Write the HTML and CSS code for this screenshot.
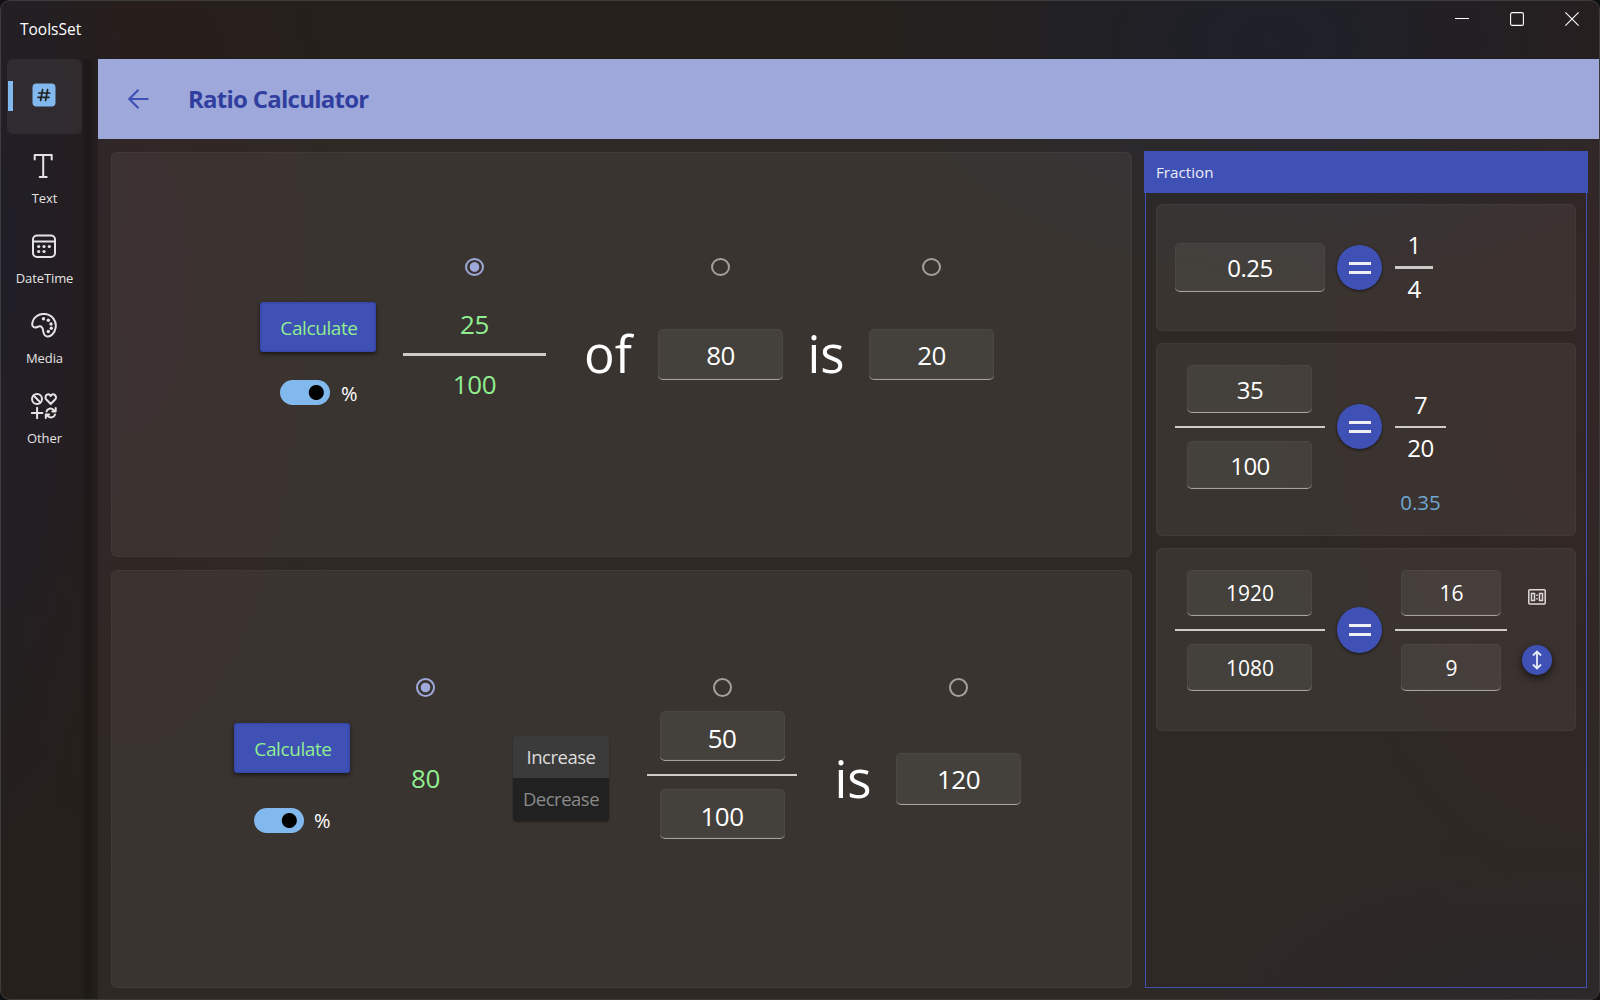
FILE: index.html
```html
<!DOCTYPE html>
<html lang="en">
<head>
<meta charset="utf-8">
<title>ToolsSet</title>
<link rel="stylesheet" href="styles.css">
</head>
<body>
<div class="window">
  <header class="titlebar">
    <span class="app-name">ToolsSet</span>
    <div class="caption">
      <svg width="14" height="14" viewBox="0 0 14 14"><path d="M0 6.5H14" /></svg>
      <svg width="14" height="14" viewBox="0 0 14 14"><rect x=".6" y=".6" width="12.8" height="12.8" rx="1.5" /></svg>
      <svg width="14" height="14" viewBox="0 0 14 14"><path d="M.4.4 13.6 13.6M13.6.4.4 13.6" /></svg>
    </div>
  </header>
  <div class="main">
    <nav class="sidebar">
      <a class="nav active">
        <svg width="24" height="24" viewBox="0 0 24 24"><rect x=".5" y=".5" width="23" height="23" rx="4" fill="#81b8ed"/><path d="M10.600 6.500 8.600 17.500M15.600 6.500 13.600 17.500M6.800 10H17.800M6 14.300H17" fill="none" stroke="#222" stroke-width="1.700" stroke-linecap="round"/></svg>
      </a>
      <a class="nav">
        <svg width="26" height="26" viewBox="0 0 26 26"><path d="M3.700 6.500V2H20.700V6.500M12.200 2V24M8.700 24H15.700"/></svg>
        <span>Text</span>
      </a>
      <a class="nav">
        <svg width="26" height="26" viewBox="0 0 26 26"><rect x="2" y="2.500" width="22" height="21.500" rx="4"/><path d="M2 8.500H24"/><g class="dots"><circle cx="7.700" cy="13.500" r="1.600"/><circle cx="13" cy="13.500" r="1.600"/><circle cx="18.300" cy="13.500" r="1.600"/><circle cx="7.700" cy="18.500" r="1.600"/><circle cx="13" cy="18.500" r="1.600"/></g></svg>
        <span>DateTime</span>
      </a>
      <a class="nav">
        <svg width="26" height="26" viewBox="0 0 26 26"><path d="M1.200 11.500C1.500 4.500 8 0 14.500 1.100C21.500 2.300 25.800 8.200 24.600 14.800C23.700 20.500 19.500 24.300 15.800 23.400C13.200 22.800 12.500 20.500 12.200 18C11.900 14.800 10.700 12.800 7.700 13.500C6 14 4.500 15.200 2.800 14.200C1.600 13.500 1.100 12.600 1.200 11.500Z"/><g class="dots"><circle cx="12.500" cy="5.700" r="1.700"/><circle cx="17.300" cy="7.300" r="1.700"/><circle cx="20" cy="11" r="1.700"/><circle cx="20.300" cy="15.200" r="1.700"/><circle cx="17.300" cy="18.500" r="1.700"/></g></svg>
        <span>Media</span>
      </a>
      <a class="nav">
        <svg width="26" height="26" viewBox="0 0 26 26"><circle cx="6" cy="6" r="5"/><path d="M2.600 2.500 9.400 9.500"/><path d="M19.700 11 15.300 6.500C13.900 5 14.400 2.700 16 1.700C17.500 .9 19 1.600 19.700 3C20.400 1.600 22 .9 23.500 1.700C25.100 2.700 25.500 5 24.100 6.500Z"/><path d="M.8 20H11.400M6.100 14.700V25.300"/><path d="M15.500 18.500C16.300 15.500 20 14.500 22.700 17M24.700 15V18.400H21.300M24 21.500C23.200 24.600 19.300 25.500 16.700 23M14.800 25V21.600H18.200"/></svg>
        <span>Other</span>
      </a>
    </nav>
    <section class="content">
      <div class="page-head">
        <svg width="21" height="20" viewBox="0 0 21 20"><path d="M20.500 10H1.500M10.500 .8 1.300 10 10.500 19.200"/></svg>
        <h1>Ratio Calculator</h1>
      </div>
      <div class="panels">
        <div class="left">
          <div class="card calc of">
            <div class="actions">
              <button class="btn">Calculate</button>
              <div class="switch"><i></i><span>%</span></div>
            </div>
            <div class="col ratio">
              <b class="radio on"></b>
              <span class="num result">25</span>
              <hr>
              <span class="num result">100</span>
            </div>
            <span class="word w-of">of</span>
            <div class="col"><b class="radio"></b><div class="field">80</div></div>
            <span class="word w-is">is</span>
            <div class="col"><b class="radio"></b><div class="field">20</div></div>
          </div>
          <div class="card calc change">
            <div class="actions">
              <button class="btn">Calculate</button>
              <div class="switch"><i></i><span>%</span></div>
            </div>
            <div class="col base"><b class="radio on"></b><span class="num result">80</span></div>
            <div class="modes"><span class="picked">Increase</span><span>Decrease</span></div>
            <div class="col ratio">
              <b class="radio"></b>
              <div class="field">50</div>
              <hr>
              <div class="field">100</div>
            </div>
            <span class="word w-is">is</span>
            <div class="col total"><b class="radio"></b><div class="field">120</div></div>
          </div>
        </div>
        <aside class="group">
          <h2>Fraction</h2>
          <div class="group-body">
            <div class="card frac one">
              <div class="field">0.25</div>
              <div class="eq"><i></i><i></i></div>
              <div class="stack"><span>1</span><hr><span>4</span></div>
            </div>
            <div class="card frac two">
              <div class="inputs"><div class="field">35</div><hr><div class="field">100</div></div>
              <div class="eq"><i></i><i></i></div>
              <div class="stack"><span>7</span><hr><span>20</span><em>0.35</em></div>
            </div>
            <div class="card frac three">
              <div class="inputs"><div class="field">1920</div><hr><div class="field">1080</div></div>
              <div class="eq"><i></i><i></i></div>
              <div class="inputs small"><div class="field">16</div><hr><div class="field">9</div></div>
              <div class="tools">
                <svg width="18" height="16" viewBox="0 0 18 16"><rect x=".8" y=".8" width="16.400" height="14.200" rx="1"/><rect x="3.500" y="4.500" width="3" height="7"/><rect x="11.500" y="4.500" width="3" height="7"/><path d="M9 5.500V7M9 9V10.500"/></svg>
                <div class="swap"><svg width="12" height="20" viewBox="0 0 12 20"><path d="M6 2V18M2 5.500 6 1.500 10 5.500M2 14.500 6 18.500 10 14.500"/></svg></div>
              </div>
            </div>
          </div>
        </aside>
      </div>
    </section>
  </div>
</div>
</body>
</html>
```
FILE: styles.css
```css
* { box-sizing: border-box; }
body { margin: 0; background: #111; font-family: "Open Sans", "Noto Sans", sans-serif; font-weight: 450; color: #fff; }
h1, h2 { margin: 0; }
svg { display: block; flex: none; fill: none; }

.window {
  width: 1600px; height: 1000px; overflow: hidden;
  display: flex; flex-direction: column;
  border: 1px solid #3c3c3c; border-radius: 10px;
  background:
    radial-gradient(ellipse 420px 260px at 1270px 40px, #1e202a 0, #1e202a00 100%),
    radial-gradient(ellipse 130px 640px at 0 260px, #201e28 0, #201e2800 100%),
    radial-gradient(ellipse 230px 620px at 130px 280px, #291d1d 0, #291d1d00 100%),
    radial-gradient(ellipse 330px 640px at 1590px 330px, #2a1d1d 0, #2a1d1d00 100%),
    radial-gradient(ellipse 400px 180px at 1540px 1000px, #231f21 0, #231f2100 100%),
    #25201b;
}
.titlebar { height: 58px; flex: none; display: flex; justify-content: space-between; padding: 0 20px 0 19px; }
.app-name { font-size: 15.500px; line-height: 22px; padding-top: 17px; letter-spacing: 0; }
.caption { display: flex; gap: 41px; padding-top: 11px; }
.caption svg { stroke: #fff; stroke-width: 1.1; }
.main { flex: 1; display: flex; min-height: 0; }

.sidebar { width: 97px; flex: none; padding-left: 6px; background: linear-gradient(90deg, transparent 77px, #0000 79px, #00000038 86px, #0000 96px); }
.nav { width: 75px; height: 75px; margin-bottom: 5px; padding-top: 14px; display: flex; flex-direction: column; align-items: center; color: #e4e3e3; font-size: 13px; letter-spacing: -.1px; }
.nav span { line-height: 18px; margin-top: 10px; }
.nav svg { margin-right: 2px; stroke: #e4e3e3; stroke-width: 2; stroke-linecap: round; stroke-linejoin: round; }
.nav .dots { fill: #e4e3e3; stroke: none; }
.nav.active { border-radius: 6px; background: linear-gradient(#81b8ed, #81b8ed) 1px 22px / 5px 30px no-repeat, #ffffff0f; padding-top: 24px; }
.nav.active svg { stroke: none; }

.content { flex: 1; display: flex; flex-direction: column; background: #ffffff0b; }
.page-head { height: 80px; flex: none; display: flex; align-items: center; padding-left: 30px; gap: 39px; background: #9fa8da; color: #303f9f; }
.page-head svg { stroke: #3f51b5; stroke-width: 2.2; }
.page-head h1 { font-size: 24px; font-weight: 700; line-height: 30px; letter-spacing: -.75px; }
.panels { flex: 1; display: flex; gap: 12px; padding: 12px 11px 11px 13px; }
.left { width: 1021px; padding-top: 1px; display: grid; grid-template-rows: 405px 418px; gap: 13px; }
.card { border-radius: 6px; background: #ffffff0e; box-shadow: inset 0 0 0 1px #ffffff09; display: flex; align-items: flex-start; }

.btn { width: 116px; height: 50px; border: 0; border-radius: 3px; padding: 2px 0 0 2px; background: #3f51b5; color: #90ee90; font: 450 19px/48px "Open Sans", "Noto Sans", sans-serif; letter-spacing: -.4px; box-shadow: 0 2px 4px #0009, inset 0 0 3px #1a237e88; display: block; }
.switch { display: flex; align-items: center; gap: 11px; margin-left: 20px; font-size: 20px; line-height: 25px; }
.switch span { padding-top: 1px; height: 25px; }
.switch i { width: 50px; height: 25px; border-radius: 13px; background: radial-gradient(circle 8px at 36.300px 12.500px, #000 7px, #0000 8px), #81b8ed; }
.radio { width: 19px; height: 19px; border: 2px solid #a3a09d; border-radius: 50%; }
.radio.on { border-color: #9fa8da; background: radial-gradient(circle at center, #9fa8da 4.400px, #0000 5.200px); }
.of .radio { height: 18px; margin-bottom: 1px; }
.col { display: flex; flex-direction: column; align-items: center; width: 125px; }
hr { border: 0; margin: 0; align-self: stretch; height: 2px; background: #cdcac8; }
.field { width: 125px; height: 50px; border-radius: 5px; background: #f4ffe810; box-shadow: inset 0 0 0 1px #ffffff0a; border-bottom: 1px solid #a5a29f; text-align: center; font-size: 26px; line-height: 51px; letter-spacing: -.5px; }
.num { font-size: 26px; line-height: 36px; letter-spacing: -.3px; }
.result { color: #90ee90; }
.word { font-size: 51px; line-height: 60px; font-weight: 500; }

.of { padding-left: 149px; }
.of .actions { padding-top: 150px; }
.of .switch { margin-top: 28px; }
.of .col { padding-top: 106px; }
.of .ratio { width: 143px; margin-left: 27px; }
.of .ratio .result { margin-top: 29px; line-height: 36px; }
.of .ratio hr { height: 3px; margin-top: 11px; }
.of .ratio hr + .result { margin-top: 10px; }
.of .field { height: 51px; margin-top: 52px; line-height: 53px; }
.w-of { width: 112px; text-align: center; padding: 171px 0 0 12px; }
.of .w-is { width: 86px; text-align: center; padding-top: 171px; }

.change { padding-left: 123px; }
.change .actions { padding-top: 153px; }
.change .switch { margin-top: 35px; gap: 10px; }
.change .switch span { padding-top: 0; }
.change .switch i { background-position: -1px 0, 0 0; }
.change .col { padding-top: 108px; }
.change .base { width: 60px; margin-left: 45px; }
.base .result { margin-top: 63px; padding-left: 1px; }
.modes { width: 96px; margin: 166px 0 0 58px; height: 85px; border-radius: 4px; overflow: hidden; background: #212121; color: #8a8a8a; font-size: 18.500px; line-height: 42px; letter-spacing: -.5px; text-align: center; box-shadow: 0 1px 2px #0006; display: flex; flex-direction: column; }
.modes .picked { background: #3b3b3b; color: #dedede; }
.change .ratio { width: 150px; margin-left: 38px; }
.change .ratio .field { margin-top: 14px; line-height: 54px; }
.change .ratio hr { margin-top: 13px; }
.change .ratio hr + .field { margin-top: 13px; }
.change .w-is { width: 99px; padding: 178px 0 0 13px; text-align: center; }
.total .field { height: 52px; margin-top: 56px; line-height: 53px; }

.group { width: 444px; display: flex; flex-direction: column; }
.group h2 { height: 42px; background: #3f51b5; color: #ececf4; font-size: 15.200px; font-weight: 450; line-height: 42px; padding-left: 12px; letter-spacing: 0; }
.group-body { flex: 1; margin: 0 1px; border: 1px solid #3f51b5; border-top: 0; padding: 11px 10px; display: flex; flex-direction: column; gap: 12px; }
.frac { padding-left: 19px; }
.one { height: 127px; }
.two { height: 193px; }
.three { height: 183px; }
.frac .field { font-size: 24px; line-height: 49px; height: 48px; }
.one .field { width: 150px; height: 49px; margin-top: 39px; line-height: 50px; }
.eq { width: 45px; height: 45px; border-radius: 50%; background: #3f51b5; margin: 61px 13px 0 12px; display: flex; flex-direction: column; align-items: center; justify-content: center; gap: 6px; box-shadow: 0 1px 3px #0009; }
.eq i { width: 22px; height: 3px; background: #f0f0f5; }
.one .eq { margin-top: 41px; }
.stack { width: 51px; display: flex; flex-direction: column; align-items: center; font-size: 24px; line-height: 30px; letter-spacing: -.5px; padding-top: 47px; }
.stack hr { margin: 6px 0 5px; }
.stack em { font-style: normal; font-size: 20.500px; color: #6fa8d3; margin-top: 26px; letter-spacing: 0; line-height: 26px; }
.one .stack { width: 38px; padding-top: 26px; }
.one .stack hr { height: 3px; margin: 6px 0 5px; }
.inputs { width: 150px; display: flex; flex-direction: column; align-items: flex-start; padding-top: 22px; }
.inputs .field { margin-left: 12px; padding-left: 1px; }
.inputs hr { margin: 13px 0; }
.three .field { font-size: 21px; height: 46px; line-height: 47px; letter-spacing: 0; }
.three hr + .field { height: 47px; line-height: 48px; }
.three .eq { margin-top: 59px; height: 46px; }
.three .small { width: 112px; }
.small .field { width: 100px; margin-left: 6px; }
.tools { margin-left: 15px; padding-top: 41px; display: flex; flex-direction: column; align-items: center; gap: 40px; }
.tools svg { stroke: #dedbd9; stroke-width: 1.5; }
.swap { width: 30px; height: 30px; border-radius: 50%; background: #3f51b5; display: flex; align-items: center; justify-content: center; box-shadow: 0 3px 8px #000a; }
.swap svg { stroke: #e8eaf6; stroke-width: 1.8; }
```
